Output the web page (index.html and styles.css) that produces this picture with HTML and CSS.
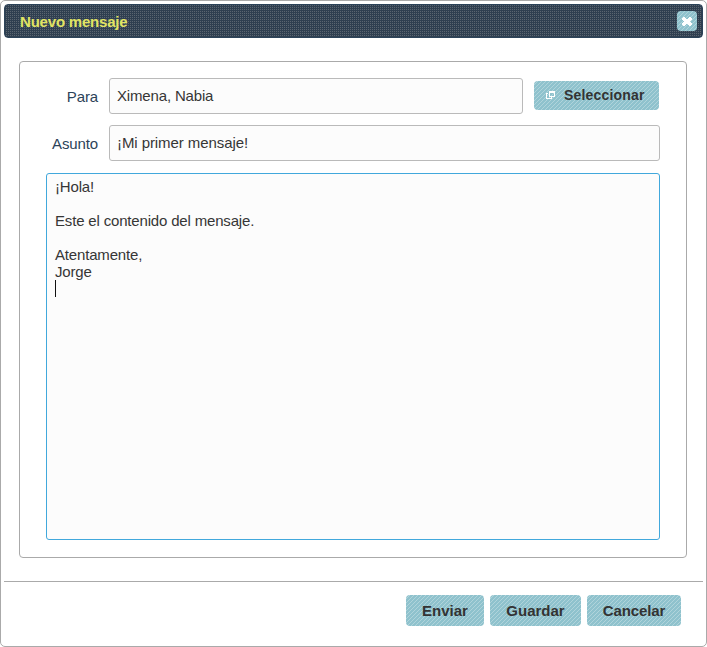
FILE: index.html
```html
<!DOCTYPE html>
<html lang="es">
<head>
<meta charset="utf-8">
<title>Nuevo mensaje</title>
<link rel="stylesheet" href="styles.css">
</head>
<body>
<div class="dialog">
  <header class="titlebar">
    <h1>Nuevo mensaje</h1>
    <button class="close striped" aria-label="Cerrar">
      <svg width="10" height="9" viewBox="0 0 10 9" shape-rendering="crispEdges"><path fill="#fff" d="M1 0h2v1h1v1h2v-1h1v-1h2v1h1v2h-1v1h-1v1h1v1h1v2h-1v1h-2v-1h-1v-1h-2v1h-1v1h-2v-1h-1v-2h1v-1h1v-1h-1v-1h-1v-2h1z"/></svg>
    </button>
  </header>
  <main class="panel">
    <div class="row">
      <label>Para</label>
      <div class="field recipients">Ximena, Nabia</div>
      <button class="select striped">
        <svg width="9" height="8" viewBox="0 0 9 8" shape-rendering="crispEdges"><path fill="#fff" fill-rule="evenodd" d="M3 0h6v6h-6zM4 2v3h4v-3zM0 2h2v1h-1v4h4v-1h1v2h-6z"/></svg>
        <span>Seleccionar</span>
      </button>
    </div>
    <div class="row">
      <label>Asunto</label>
      <div class="field subject">¡Mi primer mensaje!</div>
    </div>
    <div class="message">¡Hola!

Este el contenido del mensaje.

Atentamente,
Jorge
<span class="caret"></span></div>
  </main>
  <footer class="actions">
    <button class="send striped">Enviar</button>
    <button class="save striped">Guardar</button>
    <button class="cancel striped">Cancelar</button>
  </footer>
</div>
</body>
</html>
```

FILE: styles.css
```css
* { box-sizing: border-box; }
body {
  margin: 0;
  background: #fff;
  font: 15px/17px "Liberation Sans", Arial, sans-serif;
  color: #363636;
}
button {
  border: 0;
  padding: 0;
  font: bold 15px/17px "Liberation Sans", Arial, sans-serif;
  color: #333;
}
.dialog {
  width: 707px;
  height: 647px;
  padding: 3px;
  border: 1px solid #aaa;
  border-radius: 5px;
  display: flex;
  flex-direction: column;
}
.titlebar {
  height: 34px;
  flex: none;
  padding: 0 5px 0 15px;
  display: flex;
  align-items: center;
  justify-content: space-between;
  border: 1px solid #2c4359;
  border-radius: 4px;
  background: conic-gradient(#5a6570 25%, #2f3f50 0) 0 0 / 2px 2px;
}
.titlebar h1 {
  margin: 0;
  font-size: 15px;
  line-height: 17px;
  letter-spacing: -0.2px;
  color: #e1e463;
}
.striped {
  --stripe: conic-gradient(from 0deg at 1px 1px, transparent 75%, #b0d4db 0);
  border-radius: 4px;
  background-color: #8fc2cd;
  background-image: var(--stripe), var(--stripe), var(--stripe), var(--stripe);
  background-size: 4px 4px;
  background-position: 0 3px, 1px 2px, 2px 1px, 3px 0;
}
.close {
  width: 20px;
  height: 20px;
  display: grid;
  place-items: center;
}
.panel {
  height: 497px;
  margin: 23px 16px 0 15px;
  padding: 16px 26px 0;
  border: 1px solid #aaa;
  border-radius: 4px;
}
.row {
  display: flex;
  height: 36px;
  margin-bottom: 11px;
}
.row label {
  width: 52px;
  margin-right: 11px;
  padding-top: 10px;
  text-align: right;
  letter-spacing: -0.12px;
  color: #2c4359;
}
.field {
  flex: 1;
  padding: 8px 7px;
  border: 1px solid #bababa;
  border-radius: 3px;
  background: #fcfcfc;
}
.recipients { letter-spacing: -0.16px; }
.subject { letter-spacing: -0.08px; }
.select {
  width: 125px;
  height: 29px;
  margin: 3px 1px 0 11px;
  padding: 0 0 1px 12px;
  display: flex;
  align-items: center;
  gap: 9px;
  font-size: 14px;
  letter-spacing: 0.18px;
}
.message {
  height: 367px;
  margin-top: 12px;
  padding: 4px 8px;
  border: 1px solid #41a8dc;
  border-radius: 3px;
  background: #fcfcfc;
  letter-spacing: -0.17px;
  white-space: pre-wrap;
}
.caret {
  display: inline-block;
  width: 1px;
  height: 17px;
  vertical-align: top;
  background: #111;
}
.actions {
  margin-top: 23px;
  padding: 13px 22px 0 0;
  border-top: 1px solid #aaa;
  display: flex;
  justify-content: flex-end;
  gap: 6px;
}
.actions button { height: 31px; }
.send { width: 78px; }
.save { width: 91px; }
.cancel { width: 94px; }
.actions .cancel { letter-spacing: -0.1px; }
```
